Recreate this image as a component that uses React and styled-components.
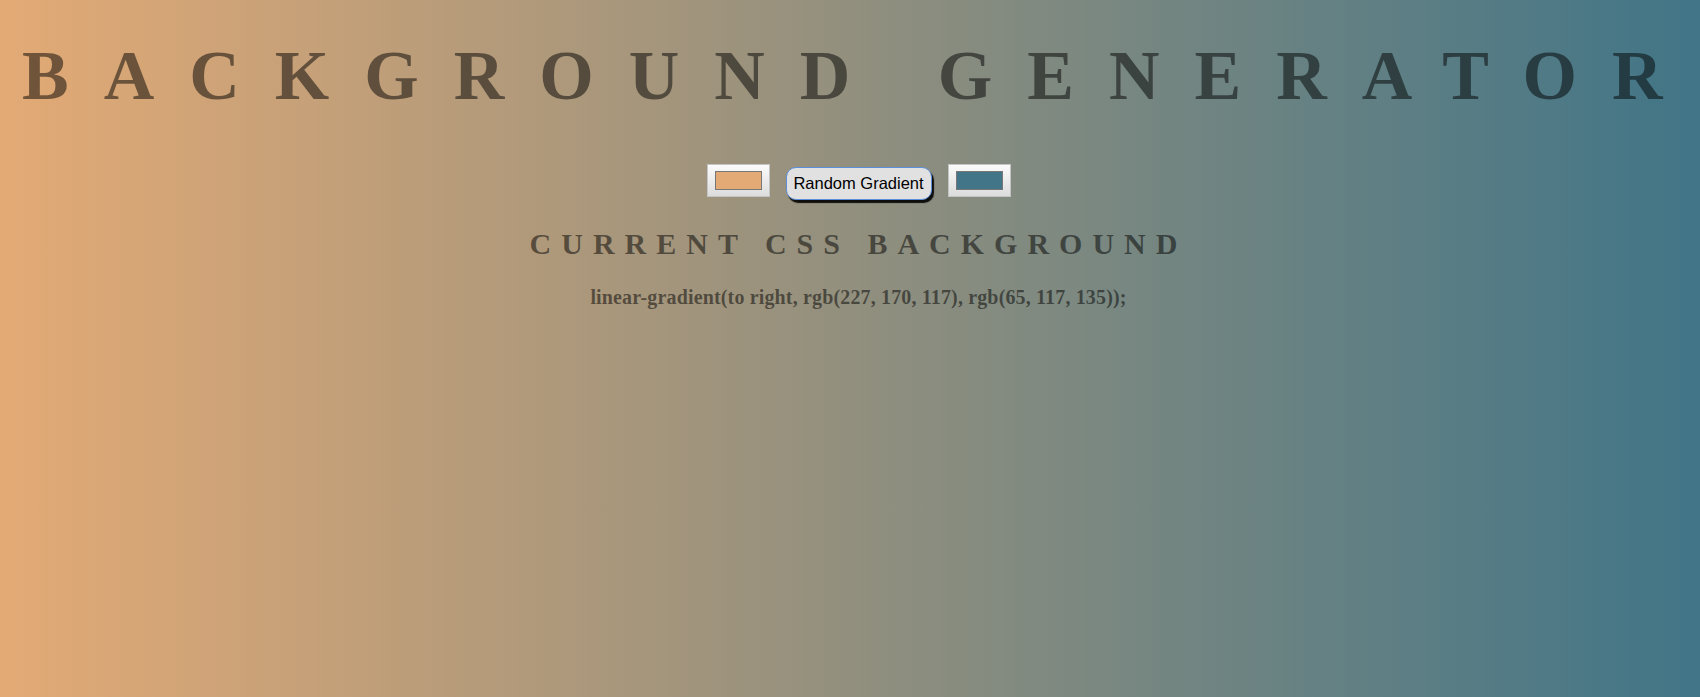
import React, {useState} from 'react';
import styled, {createGlobalStyle} from 'styled-components';

const GlobalStyle = createGlobalStyle`
  html, body {
    margin: 0;
    padding: 0;
  }
  body {
    font-family: "Liberation Serif", "Times New Roman", serif;
  }
`;

const Page = styled.div`
  min-height: 100vh;
  box-sizing: border-box;
  padding: 36px 0 0 17px;
  display: flex;
  flex-direction: column;
  background: ${props => props.$bg};
  color: rgba(0, 0, 0, 0.5);
  text-align: center;
`;

const Title = styled.h1`
  margin: 0;
  padding-left: 5px;
  text-align: left;
  white-space: nowrap;
  font: 700 70px/80px "Liberation Serif", "Times New Roman", serif;
  letter-spacing: 35px;
  text-transform: uppercase;
`;

const Controls = styled.div`
  display: flex;
  justify-content: center;
  align-items: flex-start;
  gap: 16px;
  margin-top: 48px;
`;

const ColorInput = styled.input`
  -webkit-appearance: none;
  appearance: none;
  width: 63px;
  height: 33px;
  margin: 0;
  padding: 6px 7px;
  box-sizing: border-box;
  border: 1px solid #c4c4c4;
  background: linear-gradient(to bottom, #fbfbfb, #dcdcdc);
  cursor: pointer;

  &::-webkit-color-swatch-wrapper {
    padding: 0;
  }
  &::-webkit-color-swatch {
    border: 1px solid #777;
    border-radius: 0;
  }
`;

const RandomButton = styled.button`
  width: 146px;
  height: 33px;
  margin-top: 3px;
  padding: 0;
  box-sizing: border-box;
  border: 1px solid #5b8fd9;
  border-radius: 10px;
  background: #e1e1e1;
  box-shadow: 2px 3px 1px rgba(0, 0, 0, 0.9);
  font: 400 16.5px "Liberation Sans", Arial, sans-serif;
  color: #000;
  cursor: pointer;
`;

const SubTitle = styled.h3`
  margin: 26px 0 0;
  font: 700 30px/36px "Liberation Serif", "Times New Roman", serif;
  letter-spacing: 10px;
  text-transform: uppercase;
`;

const CssText = styled.h3`
  margin: 23px 0 0;
  font: 700 20px/24px "Liberation Serif", "Times New Roman", serif;
  letter-spacing: 0.15px;
`;

const toHex = ([r, g, b]) =>
  '#' + [r, g, b].map(v => v.toString(16).padStart(2, '0')).join('');

const fromHex = hex => [1, 3, 5].map(i => parseInt(hex.slice(i, i + 2), 16));

const randomColor = () => [0, 0, 0].map(() => Math.floor(Math.random() * 256));

const App = () => {
    const [left, setLeft] = useState([227, 170, 117]);
    const [right, setRight] = useState([65, 117, 135]);

    const gradient = `linear-gradient(to right, rgb(${left.join(', ')}), rgb(${right.join(', ')}))`;

    const handleRandom = () => {
        setLeft(randomColor());
        setRight(randomColor());
    };

    return (
        <Page $bg={gradient}>
            <GlobalStyle/>
            <Title>Background Generator</Title>
            <Controls>
                <ColorInput
                    type="color"
                    value={toHex(left)}
                    onChange={e => setLeft(fromHex(e.target.value))}
                />
                <RandomButton onClick={handleRandom}>Random Gradient</RandomButton>
                <ColorInput
                    type="color"
                    value={toHex(right)}
                    onChange={e => setRight(fromHex(e.target.value))}
                />
            </Controls>
            <SubTitle>Current CSS Background</SubTitle>
            <CssText>{gradient};</CssText>
        </Page>
    );
};

export default App;
